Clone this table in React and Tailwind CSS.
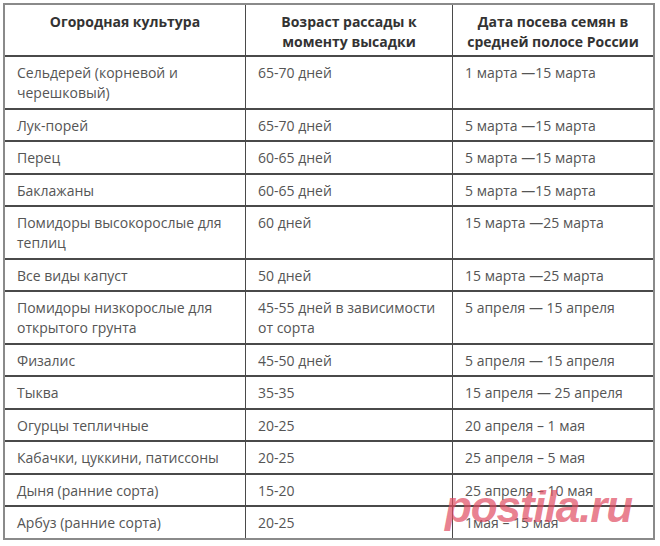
const rows = [
  ["Сельдерей (корневой и черешковый)", "65-70 дней", "1 марта —15 марта"],
  ["Лук-порей", "65-70 дней", "5 марта —15 марта"],
  ["Перец", "60-65 дней", "5 марта —15 марта"],
  ["Баклажаны", "60-65 дней", "5 марта —15 марта"],
  ["Помидоры высокорослые для теплиц", "60 дней", "15 марта —25 марта"],
  ["Все виды капуст", "50 дней", "15 марта —25 марта"],
  ["Помидоры низкорослые для открытого грунта", "45-55 дней в зависимости от сорта", "5 апреля — 15 апреля"],
  ["Физалис", "45-50 дней", "5 апреля — 15 апреля"],
  ["Тыква", "35-35", "15 апреля — 25 апреля"],
  ["Огурцы тепличные", "20-25", "20 апреля – 1 мая"],
  ["Кабачки, цуккини, патиссоны", "20-25", "25 апреля – 5 мая"],
  ["Дыня (ранние сорта)", "15-20", "25 апреля – 10 мая"],
  ["Арбуз (ранние сорта)", "20-25", "1мая – 15 мая"],
];

const App = () => {
  return (
    <div className="w-[660px] h-[546px] bg-white p-[3px] font-['Open_Sans',sans-serif]">
      <div className="relative w-[652px] border-2 border-[#8a8a8a]">
        <table className="w-full table-fixed border-separate border-spacing-0 text-[14px] leading-5">
          <colgroup>
            <col className="w-[241px]" />
            <col className="w-[207px]" />
            <col />
          </colgroup>
          <thead>
            <tr>
              <th className="align-top text-center font-bold text-[#333] px-3 pt-[7px] pb-[3px] border-b-2 border-r border-[#4a4a4a]">
                Огородная культура
              </th>
              <th className="align-top text-center font-bold text-[#333] px-3 pt-[7px] pb-[3px] border-b-2 border-r border-[#4a4a4a]">
                Возраст рассады к моменту высадки
              </th>
              <th className="align-top text-center font-bold text-[#333] px-3 pt-[7px] pb-[3px] border-b-2 border-[#4a4a4a]">
                Дата посева семян в средней полосе России
              </th>
            </tr>
          </thead>
          <tbody>
            {rows.map((r, i) => {
              const last = i === rows.length - 1;
              return (
                <tr key={i}>
                  <td className={`align-top text-left text-[#555] pl-3 pr-2 pt-[6px] pb-[4.5px] border-r border-[#4a4a4a] ${last ? "" : "border-b-2"}`}>
                    {r[0]}
                  </td>
                  <td className={`align-top text-left text-[#555] pl-3 pr-1 pt-[6px] pb-[4.5px] border-r border-[#4a4a4a] ${last ? "" : "border-b-2"}`}>
                    {r[1]}
                  </td>
                  <td className={`align-top text-left text-[#555] pl-3 pr-2 pt-[6px] pb-[4.5px] border-[#4a4a4a] ${last ? "" : "border-b-2"}`}>
                    {r[2]}
                  </td>
                </tr>
              );
            })}
          </tbody>
        </table>
        {/* watermark */}
        <div className="absolute left-[440px] top-[480px] text-[44px] leading-none font-bold italic font-['Liberation_Sans',sans-serif] text-[#e04a60]/70 tracking-tight pointer-events-none">
          postila.ru
        </div>
      </div>
    </div>
  );
};

export default App;
